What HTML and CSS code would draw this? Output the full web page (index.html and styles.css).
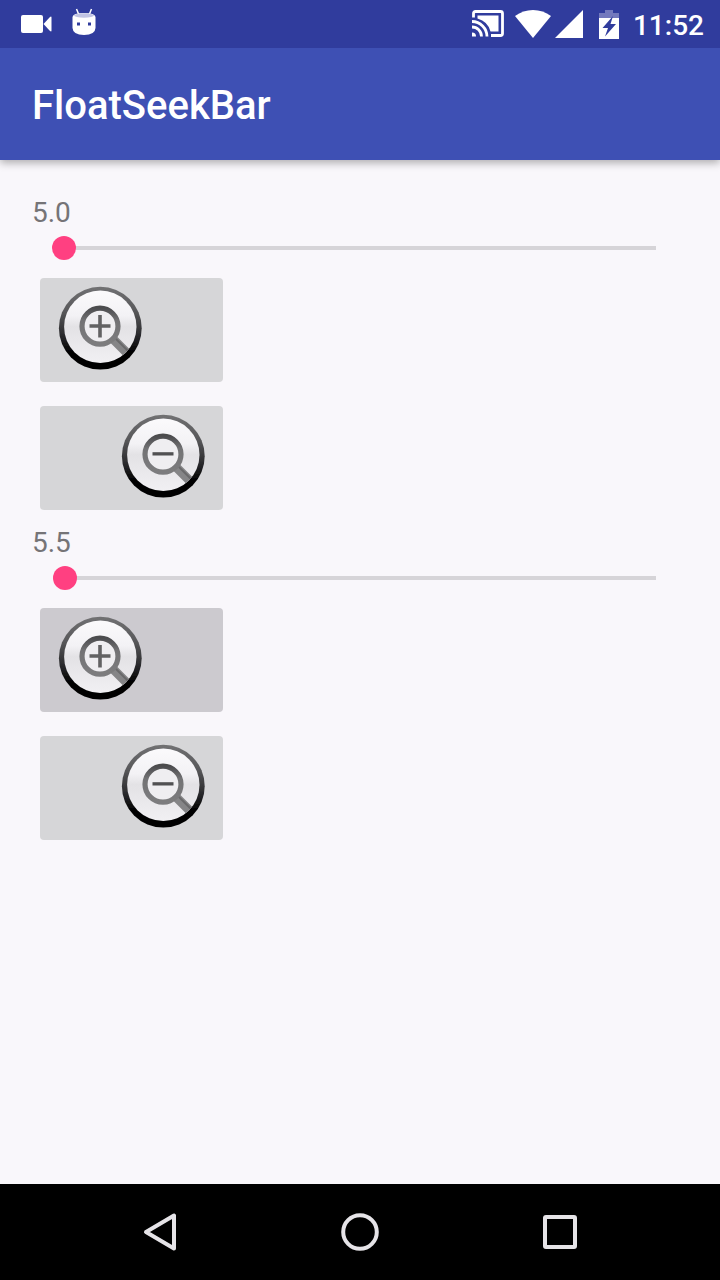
FILE: index.html
```html
<!DOCTYPE html>
<html lang="en">
<head>
<meta charset="utf-8">
<meta name="viewport" content="width=device-width, initial-scale=1">
<title>FloatSeekBar</title>
<link rel="stylesheet" href="styles.css">
</head>
<body>
<svg class="defs" aria-hidden="true">
  <defs>
    <linearGradient id="rim" x1="0" y1="0" x2="0" y2="1">
      <stop offset="0" stop-color="#717173"/>
      <stop offset=".3" stop-color="#58585a"/>
      <stop offset=".6" stop-color="#28282a"/>
      <stop offset=".8" stop-color="#000"/>
    </linearGradient>
    <linearGradient id="face" x1="0" y1="0" x2="0" y2="1">
      <stop offset="0" stop-color="#fbfafc"/>
      <stop offset=".35" stop-color="#f3f2f5"/>
      <stop offset=".5" stop-color="#e3e2e5"/>
      <stop offset="1" stop-color="#f1f0f3"/>
    </linearGradient>
    <linearGradient id="lens" x1="0" y1="0" x2="0" y2="1">
      <stop offset="0" stop-color="#4c4c4e"/>
      <stop offset=".35" stop-color="#727274"/>
      <stop offset="1" stop-color="#7c7c7e"/>
    </linearGradient>
    <filter id="soft" x="-10%" y="-10%" width="120%" height="120%"><feGaussianBlur stdDeviation=".6"/></filter>
    <filter id="fine" x="-10%" y="-10%" width="120%" height="120%"><feGaussianBlur stdDeviation=".5"/></filter>
    <clipPath id="disc"><circle cx="50.3" cy="46.8" r="36.200"/></clipPath>
    <g id="magnifier">
      <circle cx="50.3" cy="48.2" r="41.4" fill="url(#rim)" filter="url(#soft)"/>
      <circle cx="50.3" cy="46.8" r="36.2" fill="url(#face)" filter="url(#fine)"/>
      <g clip-path="url(#disc)">
        <path d="M63 59L82 78" stroke="#858587" stroke-width="9" filter="url(#fine)"/>
        <path d="M65 58L83 76" stroke="#69696b" stroke-width="2" filter="url(#fine)"/>
      </g>
      <circle cx="50" cy="46.2" r="18" fill="#efeef1" stroke="url(#lens)" stroke-width="5.2" filter="url(#fine)"/>
    </g>
    <path id="plus" d="M39.500 44.200H48.200V35H51.800V44.200H60.500V47.800H51.800V57.500H48.200V47.800H39.500Z" fill="#626264" filter="url(#fine)"/>
    <rect id="minus" x="39.500" y="44.200" width="21" height="3.300" fill="#515153"/>
  </defs>
</svg>
<div class="screen">
  <div class="status-bar">
    <div class="status-group notifications">
      <svg width="32" height="20" viewBox="0 0 32 20" fill="#fff"><rect x="1" y="1" width="22" height="18" rx="2"/><path d="M23.500 10L30 3Q31.500 2 31.500 3.500V16.500Q31.500 18 30 17Z"/></svg>
      <svg width="24" height="32" viewBox="0 0 24 32" fill="#fff"><path d="M4.500 1L7 7M19.500 1L17 7" stroke="#fff" stroke-width="1.500"/><path d="M.5 9Q1 5 12 5T23.500 9V20Q23 27 12 27T.5 20Z"/><ellipse cx="12" cy="7.500" rx="10" ry="2.200" fill="#c1c4e4"/><rect x="5" y="14.500" width="3" height="3" fill="#303c9d"/><rect x="16" y="14.500" width="3" height="3" fill="#303c9d"/></svg>
    </div>
    <div class="status-group">
      <svg class="cast" width="32" height="28" viewBox="0 0 32 28" fill="none" stroke="#fff"><path d="M1.500 7.500V3.500Q1.500 1.500 3.500 1.500H28.500Q30.500 1.500 30.500 3.500V23.500Q30.500 25.500 28.500 25.500H19" stroke-width="2.800"/><path d="M5.500 5.500H26.500V21.500H18.500Q16 11.500 5.500 8.500Z" fill="#fff" stroke="none"/><path d="M0 11.500A15 15 0 0 1 15 26.500M0 17A9.500 9.500 0 0 1 9.500 26.500" stroke-width="2.800"/><path d="M0 22.500A4 4 0 0 1 4 26.500H0Z" fill="#fff" stroke="none"/></svg>
      <svg width="36" height="28" viewBox="0 0 36 28" fill="#fff"><path d="M0 6Q8 0 18 0T36 6L18 28Z"/></svg>
      <svg class="signal" width="28" height="28" viewBox="0 0 28 28" fill="#fff"><path d="M28 0V28H0Z"/></svg>
      <svg class="battery" width="20" height="30" viewBox="0 0 20 30"><path d="M0 4H6V1H14V4H20V10H0Z" fill="#7379bd"/><path d="M0 9H20V30H0Z" fill="#fff"/><path d="M14 7L3.500 19H9L6 27.500L17 15H11.500Z" fill="#303c9d"/></svg>
      <time class="clock">11:52</time>
    </div>
  </div>
  <header class="app-bar"><h1 class="title">FloatSeekBar</h1></header>
  <main class="content">
    <section class="seek-group">
      <label class="value" for="seek-one">5.0</label>
      <input class="seek" id="seek-one" type="range" min="5" max="500" step="0.5" value="5">
      <button class="zoom zoom-in" type="button" aria-label="Increase first value"><svg width="84" height="88" viewBox="8 6 84 88"><use href="#magnifier"/><use href="#plus"/></svg></button>
      <button class="zoom zoom-out" type="button" aria-label="Decrease first value"><svg width="84" height="88" viewBox="8 6 84 88"><use href="#magnifier"/><use href="#minus"/></svg></button>
    </section>
    <section class="seek-group">
      <label class="value" for="seek-two">5.5</label>
      <input class="seek" id="seek-two" type="range" min="5" max="500" step="0.5" value="5.5">
      <button class="zoom zoom-in active" type="button" aria-label="Increase second value"><svg width="84" height="88" viewBox="8 6 84 88"><use href="#magnifier"/><use href="#plus"/></svg></button>
      <button class="zoom zoom-out" type="button" aria-label="Decrease second value"><svg width="84" height="88" viewBox="8 6 84 88"><use href="#magnifier"/><use href="#minus"/></svg></button>
    </section>
  </main>
  <nav class="nav-bar" aria-label="System">
    <button class="nav-button" type="button" aria-label="Back"><svg width="40" height="40" viewBox="0 0 40 40"><path d="M6 20L34 3.500V36.500Z"/></svg></button>
    <button class="nav-button" type="button" aria-label="Home"><svg width="40" height="40" viewBox="0 0 40 40"><circle cx="20" cy="20" r="16.800"/></svg></button>
    <button class="nav-button" type="button" aria-label="Recent apps"><svg width="40" height="40" viewBox="0 0 40 40"><rect x="5" y="5" width="30" height="30" rx="1"/></svg></button>
  </nav>
</div>
</body>
</html>
```

FILE: styles.css
```css
* { box-sizing: border-box; }

body {
  margin: 0;
  background: #f9f7fb;
  font-family: Roboto, "Noto Sans", sans-serif;
}

svg { display: block; flex: none; }

.defs { position: absolute; width: 0; height: 0; }

.screen {
  display: flex;
  flex-direction: column;
  min-height: 100vh;
}

.status-bar {
  display: flex;
  align-items: center;
  justify-content: space-between;
  height: 48px;
  padding: 0 16px 0 20px;
  background: #303c9d;
  color: #fff;
}

.status-group { display: flex; align-items: center; }
.notifications { gap: 20px; }
.cast { margin-right: 11px; }
.signal { margin-left: 4px; }
.battery { margin: 0 14px 0 16px; }

.clock {
  padding-top: 4px;
  font-size: 28px;
  font-weight: 500;
  line-height: 44px;
}

.app-bar {
  display: flex;
  align-items: center;
  height: 112px;
  padding: 4px 32px 0;
  background: #3e50b4;
  color: #fff;
  box-shadow: 0 3px 8px rgba(0, 0, 0, .3);
  clip-path: inset(0 0 -16px 0);
}

.title {
  margin: 0;
  font-size: 40px;
  font-weight: 500;
  line-height: 48px;
}

.content {
  flex: 1;
  padding: 32px;
}

.seek-group {
  display: flex;
  flex-direction: column;
  align-items: flex-start;
}

.value {
  color: #757477;
  font-size: 28px;
  line-height: 42px;
  margin-bottom: -4px;
}

.seek {
  -webkit-appearance: none;
  appearance: none;
  align-self: stretch;
  height: 36px;
  margin: 0 20px;
  background: transparent;
}

.seek::-webkit-slider-runnable-track {
  height: 24px;
  background: linear-gradient(#d6d4d8, #d6d4d8) center / calc(100% - 24px) 4px no-repeat;
}

.seek::-webkit-slider-thumb {
  -webkit-appearance: none;
  width: 24px;
  height: 24px;
  border-radius: 50%;
  background: #ff4081;
}

.zoom {
  display: flex;
  align-items: center;
  width: 183px;
  height: 104px;
  margin: 12px 8px;
  padding: 8px 18px;
  border: 0;
  border-radius: 4px;
  background: #d6d6d8;
}

.zoom-in { justify-content: flex-start; }
.zoom-out { justify-content: flex-end; }
.zoom.active { background: #cccacf; }

.nav-bar {
  display: flex;
  justify-content: center;
  height: 96px;
  background: #000;
}

.nav-button {
  display: flex;
  align-items: center;
  justify-content: center;
  width: 200px;
  padding: 0;
  border: 0;
  background: transparent;
  fill: none;
  stroke: #e6e4e8;
  stroke-width: 4;
  stroke-linejoin: round;
}
```
